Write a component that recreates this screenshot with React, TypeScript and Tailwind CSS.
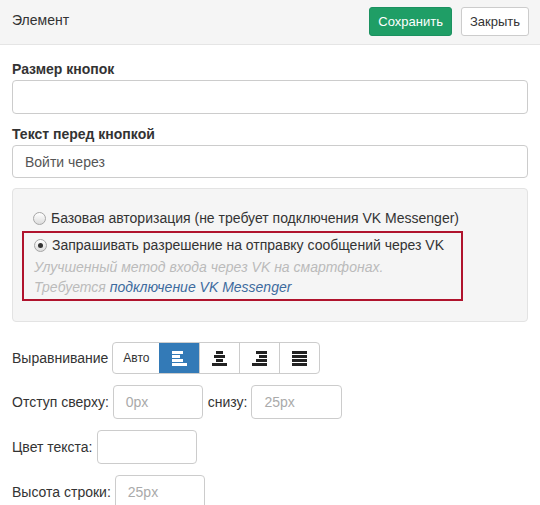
import React from 'react';

const font = { fontFamily: '"Liberation Sans", Arial, sans-serif' };

const Radio: React.FC<{ checked?: boolean }> = ({ checked }) => (
  <span className="inline-flex items-center justify-center w-[13px] h-[13px] rounded-full border border-[#a6a6a6] bg-gradient-to-b from-white to-[#dcdcdc] shrink-0">
    {checked && <span className="w-[5px] h-[5px] rounded-full bg-[#333]" />}
  </span>
);

const AlignIcon: React.FC<{ widths: number[]; align: 'left' | 'center' | 'right'; color: string }> = ({ widths, align, color }) => (
  <svg width="15" height="15" viewBox="0 0 15 15">
    {widths.map((w, i) => {
      const x = align === 'left' ? 0 : align === 'right' ? 15 - w : Math.round((15 - w) / 2);
      return <rect key={i} x={x} y={i * 4} width={w} height="3" fill={color} />;
    })}
  </svg>
);

const SmallInput: React.FC<{ width: string; placeholder?: string }> = ({ width, placeholder }) => (
  <div className={`${width} h-[34px] border border-[#ccc] rounded-[4px] bg-white px-3 flex items-center text-[#aaa]`}>
    {placeholder}
  </div>
);

export default function App() {
  return (
    <div className="w-[540px] h-[505px] overflow-hidden bg-white text-[14px] leading-[20px] text-[#333]" style={font}>
      <div className="h-[45px] bg-[#f5f5f5] border-b border-[#e5e5e5] flex items-start pl-3 pr-[11px]">
        <div className="mt-[10px]">Элемент</div>
        <div className="ml-auto flex gap-[9px] mt-[7px]">
          <button className="h-[29px] px-[8px] rounded-[3px] bg-[#1f9e66] text-white text-[13px] border border-[#1b9160]">Сохранить</button>
          <button className="h-[29px] px-[8px] rounded-[3px] bg-white text-[#333] text-[13px] border border-[#ccc]">Закрыть</button>
        </div>
      </div>

      <div className="px-3 pt-[14px]">
        <div className="font-bold mb-[1px]">Размер кнопок</div>
        <div className="h-[34px] border border-[#ccc] rounded-[4px]" />
        <div className="font-bold mt-[10px] mb-[1px]">Текст перед кнопкой</div>
        <div className="h-[33px] border border-[#ccc] rounded-[4px] px-3 flex items-center text-[#555]">Войти через</div>

        <div className="mt-[10px] bg-[#f5f5f5] border border-[#e3e3e3] rounded-[4px] pt-[19px] pb-[19px] pl-[9px] h-[134px]">
          <div className="flex items-center gap-[5px] pl-[11px]">
            <Radio />
            <span>Базовая авторизация (не требует подключения VK Messenger)</span>
          </div>
          <div className="mt-[3px] w-[441px] border-[2px] border-[#b0132d] pl-[10px] pt-[2px] pb-[2px]">
            <div className="flex items-center gap-[5px]">
              <Radio checked />
              <span>Запрашивать разрешение на отправку сообщений через VK</span>
            </div>
            <div className="mt-[2px] italic text-[#bbb]">Улучшенный метод входа через VK на смартфонах.</div>
            <div className="italic text-[#bbb]">
              Требуется <span className="text-[#3d6b9e]">подключение VK Messenger</span>
            </div>
          </div>
        </div>

        <div className="mt-[20px] flex items-center gap-[4px]">
          <span>Выравнивание</span>
          <div className="flex h-[32px] border border-[#ccc] rounded-[4px] overflow-hidden">
            <div className="w-[46px] flex items-center justify-center text-[12px]">Авто</div>
            <div className="w-[40px] flex items-center justify-center bg-[#337ab7]">
              <AlignIcon widths={[11, 8, 11, 15]} align="left" color="#fff" />
            </div>
            <div className="w-[40px] flex items-center justify-center border-l border-[#ccc]">
              <AlignIcon widths={[7, 11, 7, 15]} align="center" color="#222" />
            </div>
            <div className="w-[40px] flex items-center justify-center border-l border-[#ccc]">
              <AlignIcon widths={[11, 8, 11, 15]} align="right" color="#222" />
            </div>
            <div className="w-[40px] flex items-center justify-center border-l border-[#ccc]">
              <AlignIcon widths={[15, 15, 15, 15]} align="left" color="#222" />
            </div>
          </div>
        </div>

        <div className="mt-[11px] flex items-center gap-[4px]">
          <span>Отступ сверху:</span>
          <SmallInput width="w-[90px]" placeholder="0px" />
          <span className="ml-[1px]">снизу:</span>
          <SmallInput width="w-[91px]" placeholder="25px" />
        </div>

        <div className="mt-[11px] flex items-center gap-[4px]">
          <span>Цвет текста:</span>
          <SmallInput width="w-[100px]" />
        </div>

        <div className="mt-[11px] flex items-center gap-[4px]">
          <span>Высота строки:</span>
          <SmallInput width="w-[90px]" placeholder="25px" />
        </div>
      </div>
    </div>
  );
}
